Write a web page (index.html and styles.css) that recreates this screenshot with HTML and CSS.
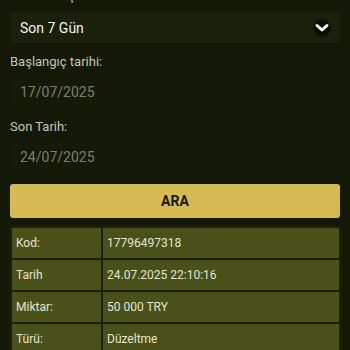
FILE: index.html
```html
<!DOCTYPE html>
<html lang="tr">
<head>
<meta charset="utf-8">
<link rel="stylesheet" href="styles.css">
</head>
<body>
<div class="page">
  <div class="field first">
    <div class="label">Dönem seçimi:</div>
    <div class="select">
      <span>Son 7 Gün</span>
      <span class="chev">
        <svg width="18" height="18" viewBox="0 0 18 18"><polyline points="4,6.5 9,11 14,6.5" fill="none" stroke="#ffffff" stroke-width="3" stroke-linecap="round" stroke-linejoin="round"/></svg>
      </span>
    </div>
  </div>
  <div class="field">
    <div class="label">Başlangıç tarihi:</div>
    <div class="date">17/07/2025</div>
  </div>
  <div class="field">
    <div class="label">Son Tarih:</div>
    <div class="date">24/07/2025</div>
  </div>
  <button class="btn">ARA</button>
  <table class="info">
    <tr><td class="k">Kod:</td><td class="v">17796497318</td></tr>
    <tr><td class="k">Tarih</td><td class="v">24.07.2025 22:10:16</td></tr>
    <tr><td class="k">Miktar:</td><td class="v">50 000 TRY</td></tr>
    <tr><td class="k">Türü:</td><td class="v">Düzeltme</td></tr>
  </table>
</div>
</body>
</html>
```
FILE: styles.css
```css
html, body {
  margin: 0;
  padding: 0;
  background: #141907;
  height: 100%;
  overflow: hidden;
}
body {
  font-family: Roboto, "Noto Sans", sans-serif;
}
.page {
  padding: 0 10px;
  display: flex;
  flex-direction: column;
}
.field {
  display: flex;
  flex-direction: column;
  gap: 6px;
  margin-bottom: 11px;
}
.field.first {
  margin-top: -12px;
  gap: 8px;
}
.label {
  font-size: 13px;
  line-height: 16px;
  color: #c4c5b7;
}
.select {
  height: 31px;
  background: #1a200a;
  display: flex;
  align-items: center;
  justify-content: space-between;
  padding: 0 8px 0 10px;
  color: #f2f2ea;
  font-size: 14px;
  border-radius: 2px;
}
.chev {
  width: 20px;
  height: 20px;
  border-radius: 50%;
  background: radial-gradient(circle, #090c03 45%, rgba(9,12,3,0) 72%);
  display: flex;
  align-items: center;
  justify-content: center;
}
.chev svg { display: block; }
.date {
  height: 32px;
  background: #151a08;
  display: flex;
  align-items: center;
  padding-left: 10px;
  color: #7c7f69;
  font-size: 14px;
}
.btn {
  height: 34px;
  border: none;
  border-radius: 3px;
  background: #d5bb52;
  color: #17180a;
  font-family: Roboto, sans-serif;
  font-weight: bold;
  font-size: 14px;
  padding: 0;
}
.info {
  margin: 8px 0 0 0;
  border-collapse: separate;
  border-spacing: 2px;
  background: #1b200a;
  width: 331px;
}
.info td {
  background: #4a5118;
  color: #e3e4d4;
  font-size: 12px;
  height: 30px;
  padding: 0 4px;
  vertical-align: middle;
}
.info td.k {
  width: 81px;
}
```
